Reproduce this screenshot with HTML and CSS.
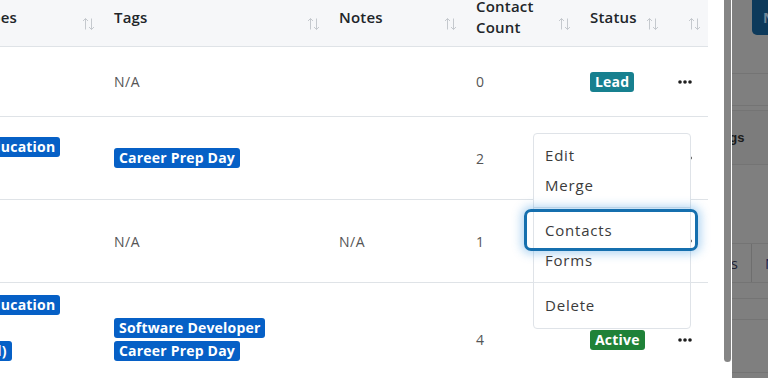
FILE: index.html
```html
<!DOCTYPE html>
<html lang="en">
<head>
    <meta charset="UTF-8">
    <meta name="viewport" content="width=device-width, initial-scale=1.0">
    <title>Organizations</title>
    <link rel="stylesheet" href="styles.css">
</head>
<body>
    <div class="screen">
        <div class="modal">
            <div class="table-wrap">
                <table class="grid">
                    <colgroup>
                        <col class="c-type">
                        <col class="c-tags">
                        <col class="c-notes">
                        <col class="c-count">
                        <col class="c-status">
                        <col class="c-actions">
                    </colgroup>
                    <thead>
                        <tr>
                            <th><div class="th-inner"><span>Client Types</span><svg class="sort" viewBox="0 0 13 14"><path d="M3.5 1.5v11M1 4l2.5-2.5L6 4M9.5 1.5v11M7 10l2.5 2.5L12 10"/></svg></div></th>
                            <th><div class="th-inner"><span>Tags</span><svg class="sort" viewBox="0 0 13 14"><path d="M3.5 1.5v11M1 4l2.5-2.5L6 4M9.5 1.5v11M7 10l2.5 2.5L12 10"/></svg></div></th>
                            <th><div class="th-inner"><span>Notes</span><svg class="sort" viewBox="0 0 13 14"><path d="M3.5 1.5v11M1 4l2.5-2.5L6 4M9.5 1.5v11M7 10l2.5 2.5L12 10"/></svg></div></th>
                            <th><div class="th-inner"><span>Contact Count</span><svg class="sort" viewBox="0 0 13 14"><path d="M3.5 1.5v11M1 4l2.5-2.5L6 4M9.5 1.5v11M7 10l2.5 2.5L12 10"/></svg></div></th>
                            <th><div class="th-inner"><span>Status</span><svg class="sort" viewBox="0 0 13 14"><path d="M3.5 1.5v11M1 4l2.5-2.5L6 4M9.5 1.5v11M7 10l2.5 2.5L12 10"/></svg></div></th>
                            <th><div class="th-inner th-end"><svg class="sort" viewBox="0 0 13 14"><path d="M3.5 1.5v11M1 4l2.5-2.5L6 4M9.5 1.5v11M7 10l2.5 2.5L12 10"/></svg></div></th>
                        </tr>
                    </thead>
                    <tbody>
                        <tr class="row-short">
                            <td>N/A</td>
                            <td>N/A</td>
                            <td></td>
                            <td>0</td>
                            <td><span class="status status-lead">Lead</span></td>
                            <td><svg class="more" viewBox="0 0 14 4"><circle cx="2" cy="2" r="1.8"/><circle cx="7" cy="2" r="1.8"/><circle cx="12" cy="2" r="1.8"/></svg></td>
                        </tr>
                        <tr class="row-mid">
                            <td>
                                <div class="tags">
                                    <span class="tag">Higher Education</span>
                                    <span class="tag">Adult</span>
                                </div>
                            </td>
                            <td>
                                <div class="tags">
                                    <span class="tag">Career Prep Day</span>
                                </div>
                            </td>
                            <td></td>
                            <td>2</td>
                            <td></td>
                            <td><svg class="more" viewBox="0 0 14 4"><circle cx="2" cy="2" r="1.8"/><circle cx="7" cy="2" r="1.8"/><circle cx="12" cy="2" r="1.8"/></svg></td>
                        </tr>
                        <tr class="row-mid">
                            <td></td>
                            <td>N/A</td>
                            <td>N/A</td>
                            <td>1</td>
                            <td></td>
                            <td><svg class="more" viewBox="0 0 14 4"><circle cx="2" cy="2" r="1.8"/><circle cx="7" cy="2" r="1.8"/><circle cx="12" cy="2" r="1.8"/></svg></td>
                        </tr>
                        <tr class="row-tall">
                            <td>
                                <div class="tags">
                                    <span class="tag">Higher Education</span>
                                    <span class="tag">Adult</span>
                                    <span class="tag">K-8 (Rural)</span>
                                    <span class="tag">Adult</span>
                                </div>
                            </td>
                            <td>
                                <div class="tags">
                                    <span class="tag">Software Developer</span>
                                    <span class="tag">Career Prep Day</span>
                                </div>
                            </td>
                            <td></td>
                            <td>4</td>
                            <td><span class="status status-active">Active</span></td>
                            <td><svg class="more" viewBox="0 0 14 4"><circle cx="2" cy="2" r="1.8"/><circle cx="7" cy="2" r="1.8"/><circle cx="12" cy="2" r="1.8"/></svg></td>
                        </tr>
                    </tbody>
                </table>

                <!-- row action menu (open) -->
                <div class="menu">
                    <div class="menu-item">Edit</div>
                    <div class="menu-item">Merge</div>
                    <div class="menu-divider"></div>
                    <div class="menu-item focused">Contacts</div>
                    <div class="menu-item">Forms</div>
                    <div class="menu-divider"></div>
                    <div class="menu-item">Delete</div>
                </div>
            </div>
            <div class="scroll-thumb"></div>
        </div>

        <div class="backdrop">
            <div class="bd-top"><div class="bd-btn">New</div></div>
            <div class="bd-line bd-a"></div>
            <div class="bd-line bd-thin"></div>
            <div class="bd-line bd-label"><span>Tags</span></div>
            <div class="bd-line bd-space"></div>
            <div class="bd-line bd-row">
                <div class="bd-cell"><span>Tags</span></div>
                <div class="bd-cell bd-cell-n">N</div>
            </div>
            <div class="bd-line bd-r2"></div>
            <div class="bd-line bd-r3"></div>
            <div class="bd-line bd-r4"></div>
        </div>
    </div>
</body>
</html>
```

FILE: styles.css
```css
body {
    margin: 0;
    font-family: 'Open Sans', 'Noto Sans', sans-serif;
    background: #fff;
    overflow: hidden;
}
.screen {
    display: flex;
    width: 768px;
    height: 378px;
    overflow: hidden;
}
.modal {
    display: flex;
    flex: none;
    width: 732px;
    background: #fff;
}
.table-wrap {
    position: relative;
    width: 724px;
    height: 378px;
    overflow: hidden;
}
.scroll-thumb {
    width: 7px;
    height: 362px;
    background: #858585;
    border-radius: 0 0 4px 4px;
}

/* table */
.grid {
    table-layout: fixed;
    border-collapse: separate;
    border-spacing: 0;
    width: 793px;
    margin: -8px 0 0 -85px;
}
.c-type { width: 187px; }
.c-tags { width: 225px; }
.c-notes { width: 137px; }
.c-count { width: 114px; }
.c-status { width: 88px; }
.c-actions { width: 42px; }
.grid th {
    box-sizing: border-box;
    height: 55px;
    padding: 0 7px 4px 12px;
    background: #f6f7f9;
    border-bottom: 1px solid #dfe3e7;
    font-size: 15px;
    font-weight: 600;
    line-height: 21px;
    letter-spacing: 0.2px;
    color: #212529;
    text-align: left;
    vertical-align: middle;
}
.th-inner {
    display: flex;
    align-items: center;
    justify-content: space-between;
    gap: 6px;
}
.th-end {
    justify-content: flex-end;
}
.sort {
    flex: none;
    width: 13px;
    height: 14px;
    margin-top: 14px;
    fill: none;
    stroke: #c5c9ce;
    stroke-width: 1;
}
.grid td {
    box-sizing: border-box;
    padding: 0 7px 0 12px;
    border-bottom: 1px solid #dfe3e7;
    font-size: 14px;
    letter-spacing: 0.5px;
    color: #555;
    vertical-align: middle;
    white-space: nowrap;
}
.row-short td { height: 70px; }
.row-mid td { height: 83px; }
.row-tall td { height: 114px; }

.tags {
    display: flex;
    flex-direction: column;
    align-items: flex-start;
    gap: 3px;
}
.tag, .status {
    display: inline-block;
    height: 20px;
    padding: 0 5px;
    border-radius: 3px;
    font-size: 14px;
    font-weight: 700;
    line-height: 20px;
    color: #fff;
    letter-spacing: 0.2px;
}
.tag { background: #0660c6; }
.status-lead { background: #17808f; }
.status-active { background: #1f8238; }
.more {
    display: block;
    width: 14px;
    height: 4px;
    fill: #1e1e1e;
}

/* dropdown */
.menu {
    position: absolute;
    left: 533px;
    top: 133px;
    width: 158px;
    box-sizing: border-box;
    padding: 6px 0 8px;
    background: #fff;
    border: 1px solid #dfe3e8;
    border-radius: 4px;
}
.menu-item {
    position: relative;
    height: 30px;
    padding: 0 11px;
    font-size: 15px;
    line-height: 30px;
    color: #3b3b3b;
    letter-spacing: 0.8px;
}
.menu-divider {
    height: 1px;
    margin: 7px 0;
    background: #e2e6ea;
}
.menu-item.focused::after {
    content: "";
    position: absolute;
    left: -10px;
    right: -8px;
    top: -6px;
    bottom: -6px;
    border: 3px solid #156fae;
    border-radius: 7px;
    box-shadow: 0 0 10px 3px rgba(40, 140, 220, 0.35);
}

/* dimmed page behind */
.backdrop {
    flex: 1;
    display: flex;
    flex-direction: column;
    background: #7f7f7f;
    overflow: hidden;
}
.bd-top {
    display: flex;
    justify-content: flex-end;
    align-items: flex-start;
    height: 73px;
    border-bottom: 1px solid #747474;
    flex: none;
}
.bd-btn {
    width: 16px;
    height: 35px;
    box-sizing: border-box;
    padding-left: 11px;
    background: #0d3a5b;
    border-bottom-left-radius: 5px;
    font-size: 14px;
    font-weight: 700;
    line-height: 35px;
    color: #6f8597;
    overflow: hidden;
    white-space: nowrap;
}
.bd-line {
    flex: none;
    border-bottom: 1px solid #747474;
}
.bd-a { height: 31px; }
.bd-thin { height: 4px; }
.bd-label {
    height: 53px;
    background: #7c7c7c;
    display: flex;
    align-items: center;
    white-space: nowrap;
}
.bd-label span {
    margin-left: -17px;
    font-family: 'Liberation Sans', sans-serif;
    font-size: 13px;
    font-weight: 700;
    color: #1b1b1b;
}
.bd-space { height: 78px; }
.bd-row {
    height: 38px;
    display: flex;
    white-space: nowrap;
}
.bd-cell {
    display: flex;
    align-items: center;
    width: 19px;
    flex: none;
    border-right: 1px solid #6e6e6e;
    overflow: hidden;
    font-size: 15px;
    color: #1f2233;
}
.bd-cell span {
    margin-left: -26px;
}
.bd-cell-n {
    width: auto;
    border-right: none;
    padding-left: 13px;
    color: #1e2650;
}
.bd-r2 { height: 15px; }
.bd-r3 { height: 20px; }
.bd-r4 { height: 52px; }
```
